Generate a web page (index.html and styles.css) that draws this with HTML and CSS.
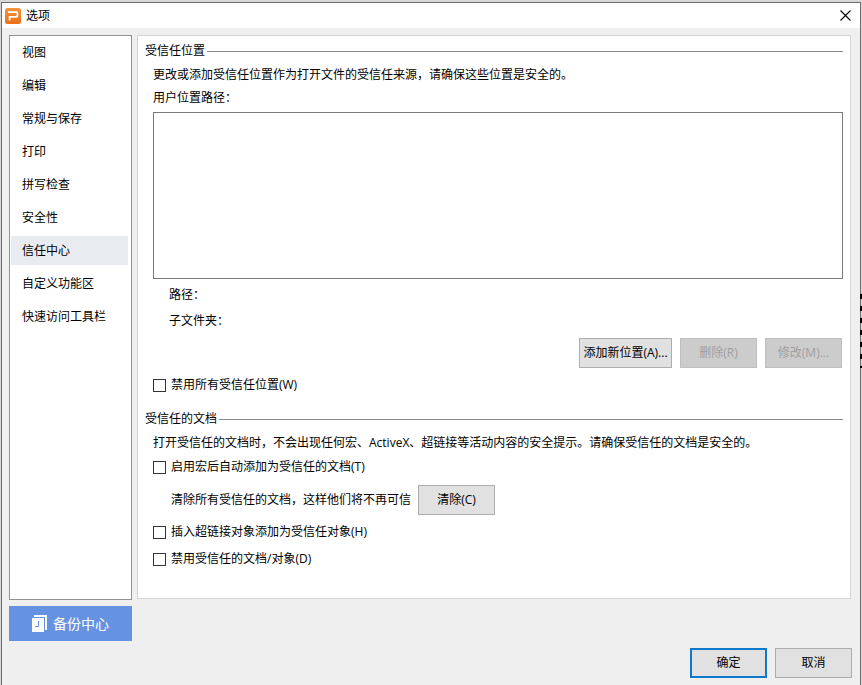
FILE: index.html
```html
<!DOCTYPE html>
<html lang="zh-CN">
<head>
    <meta charset="UTF-8">
    <meta name="viewport" content="width=device-width, initial-scale=1.0">
    <title>选项</title>
    <link rel="stylesheet" href="styles.css">
</head>
<body>
    <div class="window">
        <header class="titlebar">
            <svg class="logo" viewBox="0 0 16 16" aria-hidden="true">
                <defs>
                    <linearGradient id="logo-fill" x1="0" y1="0" x2="0" y2="1">
                        <stop offset="0" stop-color="#f2953c"/>
                        <stop offset="1" stop-color="#ee6f14"/>
                    </linearGradient>
                </defs>
                <rect width="16" height="16" rx="2.5" fill="url(#logo-fill)"/>
                <path d="M3 4.2H11.4Q12.4 4.2 12.4 5.2V7.8Q12.4 8.8 11.4 8.8H4.6V12.6" fill="none" stroke="#fff" stroke-width="1.8"/>
            </svg>
            <h1>选项</h1>
            <button class="close" type="button" aria-label="关闭">
                <svg viewBox="0 0 11 11" aria-hidden="true">
                    <path d="M0.5 0.5L10.5 10.5M10.5 0.5L0.5 10.5" stroke="#000" stroke-width="1.1"/>
                </svg>
            </button>
        </header>

        <div class="content">
            <nav class="sidebar">
                <a href="#">视图</a>
                <a href="#">编辑</a>
                <a href="#">常规与保存</a>
                <a href="#">打印</a>
                <a href="#">拼写检查</a>
                <a href="#">安全性</a>
                <a href="#" class="active">信任中心</a>
                <a href="#">自定义功能区</a>
                <a href="#">快速访问工具栏</a>
            </nav>

            <main class="panel">
                <section>
                    <h2>受信任位置</h2>
                    <div class="group">
                        <p class="desc">更改或添加受信任位置作为打开文件的受信任来源，请确保这些位置是安全的。</p>
                        <label class="list-label" for="locations">用户位置路径：</label>
                        <select class="locations" id="locations" size="8"></select>
                        <div class="details">
                            <p>路径：</p>
                            <p>子文件夹：</p>
                        </div>
                        <div class="actions">
                            <button class="btn btn-wide" type="button">添加新位置(A)...</button>
                            <button class="btn" type="button" disabled>删除(R)</button>
                            <button class="btn" type="button" disabled>修改(M)...</button>
                        </div>
                        <label class="check"><input type="checkbox">禁用所有受信任位置(W)</label>
                    </div>
                </section>

                <section class="documents">
                    <h2>受信任的文档</h2>
                    <div class="group">
                        <p class="desc">打开受信任的文档时，不会出现任何宏、ActiveX、超链接等活动内容的安全提示。请确保受信任的文档是安全的。</p>
                        <label class="check"><input type="checkbox">启用宏后自动添加为受信任的文档(T)</label>
                        <div class="clear-row">
                            <span>清除所有受信任的文档，这样他们将不再可信</span>
                            <button class="btn" type="button">清除(C)</button>
                        </div>
                        <label class="check"><input type="checkbox">插入超链接对象添加为受信任对象(H)</label>
                        <label class="check"><input type="checkbox">禁用受信任的文档/对象(D)</label>
                    </div>
                </section>
            </main>

            <button class="backup" type="button">
                <svg viewBox="0 0 16 17" aria-hidden="true">
                    <path d="M2 0H15V15H13V2H2Z" fill="#fff"/>
                    <path d="M0 3H12V17H0Z" fill="#fff"/>
                    <path d="M6.5 6V11.5H3" fill="none" stroke="#6593e1"/>
                </svg>
                备份中心
            </button>

            <footer class="footer">
                <button class="btn btn-default" type="button">确定</button>
                <button class="btn" type="button">取消</button>
            </footer>
        </div>
    </div>
    <div class="edge-marks"></div>
</body>
</html>
```
FILE: styles.css
```css
* {
    box-sizing: border-box;
}

body {
    margin: 0;
    padding: 2px 1px 0;
    background: #d6d6d6;
    color: #000;
    font-family: "Open Sans", "Noto Sans CJK SC", sans-serif;
    font-size: 12px;
    line-height: 18px;
}

h1, h2, p {
    margin: 0;
    font-size: 12px;
    font-weight: normal;
}

button, input, select {
    font: inherit;
    color: inherit;
}

.window {
    display: flex;
    flex-direction: column;
    min-height: calc(100vh - 2px);
    border: 1px solid #6b6d70;
    border-bottom: none;
    background: #efefef;
}

/* title bar */
.titlebar {
    display: flex;
    align-items: center;
    height: 25px;
    padding: 0 9px 0 3px;
    background: #fff;
}

.logo {
    width: 16px;
    height: 16px;
    margin-right: 5px;
}

.close {
    display: flex;
    margin-left: auto;
    padding: 0;
    border: none;
    background: none;
}

.close svg {
    width: 11px;
    height: 11px;
}

.content {
    flex: 1;
    display: grid;
    grid-template-columns: 123px 1fr;
    grid-template-rows: 1fr 36px 30px;
    gap: 6px 5px;
    padding: 7px 8px 7px 7px;
}

/* sidebar */
.sidebar {
    display: flex;
    flex-direction: column;
    gap: 4px;
    padding: 2px 3px 2px 1px;
    border: 1px solid #8f9297;
    background: #fff;
}

.sidebar a {
    padding: 6px 11px 5px;
    color: inherit;
    text-decoration: none;
}

.sidebar .active {
    background: #e8ebf0;
}

/* options */
.panel {
    margin: 0 1px 1px 0;
    padding: 3px 7px;
    border: 1px solid #d4d4d4;
    background: #fff;
}

h2 {
    display: flex;
    align-items: center;
    gap: 2px;
    line-height: 24px;
}

h2::after {
    content: "";
    flex: 1;
    height: 1px;
    background: #8a8a8a;
}

.group {
    padding: 1px 0 0 8px;
}

.desc {
    line-height: 22px;
}

.list-label {
    display: block;
    line-height: 24px;
}

.locations {
    display: block;
    width: 100%;
    height: 167px;
    margin: 2px 0 3px;
    border: 1px solid #7a7a7a;
    border-radius: 0;
    background: #fff;
}

.details {
    padding-left: 16px;
    line-height: 26px;
}

.actions {
    display: flex;
    justify-content: flex-end;
    gap: 8px;
    margin: 4px 1px 4px 0;
}

.btn {
    width: 77px;
    height: 30px;
    padding: 0;
    border: 1px solid #adadad;
    background: #e1e1e1;
    white-space: nowrap;
}

.btn-wide {
    width: 93px;
}

.btn-default {
    border: 2px solid #0f78c8;
}

.btn:disabled {
    border-color: #bfbfbf;
    background: #cccccc;
    color: #a0a0a0;
}

.check {
    display: flex;
    align-items: center;
    gap: 5px;
    margin-bottom: 1px;
    line-height: 26px;
}

.check input {
    appearance: none;
    width: 13px;
    height: 13px;
    margin: 0;
    border: 1px solid #333;
    background: #fff;
}

.check input:checked {
    background: #0f78c8;
}

.documents {
    margin-top: 9px;
}

.clear-row {
    display: flex;
    align-items: center;
    gap: 7px;
    margin: 5px 0 4px;
    padding-left: 18px;
}

/* bottom */
.backup {
    display: flex;
    align-items: center;
    justify-content: center;
    gap: 5px;
    height: 35px;
    padding: 0;
    border: none;
    background: #6593e1;
    color: #fff;
    font-size: 14px;
}

.backup svg {
    width: 16px;
    height: 17px;
}

.footer {
    grid-column: 1 / -1;
    display: flex;
    justify-content: flex-end;
    gap: 8px;
}

/* dashes on the right edge of the window */
.edge-marks {
    position: absolute;
    top: 294px;
    right: 0;
    width: 2px;
    height: 74px;
    background: repeating-linear-gradient(#000 0 5px, transparent 5px 12px);
}
```
